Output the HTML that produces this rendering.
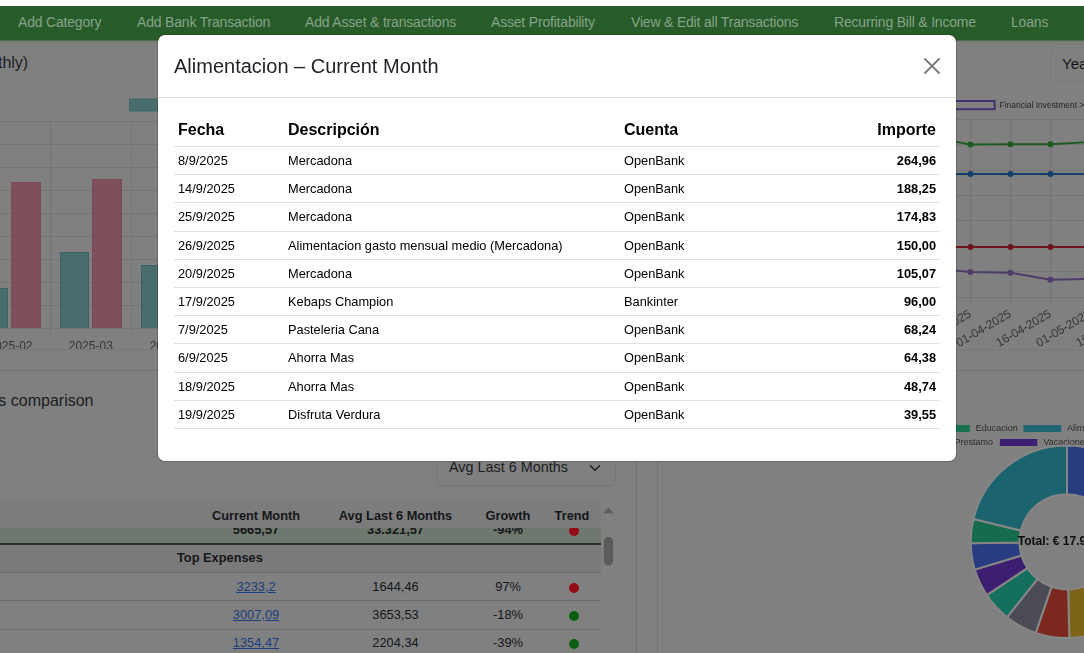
<!DOCTYPE html>
<html lang="en">
<head>
<meta charset="utf-8">
<title>Dashboard</title>
<style>
*{box-sizing:border-box;margin:0;padding:0}
html,body{width:1084px;height:653px;overflow:hidden;background:#fff}
body{font-family:"Liberation Sans",sans-serif;position:relative;color:#101214}
.abs{position:absolute}
#bg{position:absolute;left:0;top:6px;width:1084px;height:647px;background:#808080;overflow:hidden}
/* nav */
#nav{position:absolute;left:0;top:6px;width:1084px;height:34px;background:#285b2a}
#navedge{position:absolute;left:0;top:40px;width:1084px;height:4px;background:linear-gradient(#4f6b50 0,#4f6b50 25%,#717a71 25%,#7b7e7b 60%,#808080 100%)}
.nl{position:absolute;top:14px;font-size:14px;letter-spacing:-.19px;line-height:16px;color:#84a487;white-space:nowrap}
/* generic text */
.t{position:absolute;white-space:nowrap}
.b{font-weight:700}.c{text-align:center}.lk{color:#1a3e7c}
.dot{position:absolute;width:10px;height:10px;border-radius:50%}
/* modal */
#modal{position:absolute;left:157px;top:34px;width:800px;height:428px;background:#fff;border:1px solid rgba(0,0,0,.175);background-clip:padding-box;border-radius:8px;color:#212529}
#mhead{position:absolute;left:0;top:0;width:798px;height:63px;border-bottom:1px solid #dee2e6}
#mtitle{position:absolute;left:16px;top:16px;font-size:20px;line-height:30px;font-weight:400;color:#212529;white-space:nowrap}
#mclose{position:absolute;left:766px;top:23px;width:16px;height:16px;opacity:.5}
#mtable{position:absolute;left:16px;top:79px;width:766px;border-collapse:collapse;table-layout:fixed;color:#212529}
#mtable th{font-size:16px;line-height:24px;padding:4px;font-weight:700;text-align:left;border-bottom:1px solid #dee2e6;color:#000}
#mtable td{font-size:12.8px;line-height:19.2px;padding:4px;border-bottom:1px solid #dee2e6;white-space:nowrap;color:#000}
#mtable .r{text-align:right}
#mtable td.r{font-weight:700}
</style>
</head>
<body>
<div id="bg"></div>

<!-- NAV -->
<div id="nav"></div>
<div id="navedge"></div>
<span class="nl" style="left:18px">Add Category</span>
<span class="nl" style="left:137px">Add Bank Transaction</span>
<span class="nl" style="left:305px">Add Asset &amp; transactions</span>
<span class="nl" style="left:491px">Asset Profitability</span>
<span class="nl" style="left:631px">View &amp; Edit all Transactions</span>
<span class="nl" style="left:834px">Recurring Bill &amp; Income</span>
<span class="nl" style="left:1011px">Loans</span>

<!-- BACKGROUND-CONTENT -->
<!-- left card: bar chart -->
<div class="t" id="thly" style="left:-38.5px;top:54px;font-size:16px;line-height:18px;color:#1b1d1f">(Monthly)</div>
<svg class="abs" style="left:0;top:90px;will-change:transform" width="160" height="259" viewBox="0 90 160 259">
  <!-- legend box -->
  <rect x="129.5" y="99" width="39" height="12" fill="rgba(37,96,96,.6)" stroke="#3a6a6a" stroke-width="1"/>
  <g shape-rendering="crispEdges" fill="#747474">
    <rect x="0" y="121" width="160" height="1"/><rect x="0" y="144" width="160" height="1"/>
    <rect x="0" y="167" width="160" height="1"/><rect x="0" y="190" width="160" height="1"/>
    <rect x="0" y="213" width="160" height="1"/><rect x="0" y="236" width="160" height="1"/>
    <rect x="0" y="259" width="160" height="1"/><rect x="0" y="282" width="160" height="1"/>
    <rect x="0" y="305" width="160" height="1"/><rect x="0" y="328" width="160" height="1"/>
    <rect x="50" y="121" width="1" height="214"/><rect x="131" y="121" width="1" height="214"/>
  </g>
  <g shape-rendering="crispEdges">
    <!-- bars: fill .6 alpha over bg, border solid on 3 sides -->
    <path d="M-20.5 328V288.5H7.5V328" fill="rgba(37,96,96,.6)" stroke="#376363" stroke-width="1"/>
    <path d="M11.5 328V182.5H40.5V328" fill="rgba(127,49,66,.6)" stroke="#7c4a57" stroke-width="1"/>
    <path d="M60.5 328V252.5H88.5V328" fill="rgba(37,96,96,.6)" stroke="#376363" stroke-width="1"/>
    <path d="M92.5 328V179.5H121.5V328" fill="rgba(127,49,66,.6)" stroke="#7c4a57" stroke-width="1"/>
    <path d="M141.5 328V265.5H170.5V328" fill="rgba(37,96,96,.6)" stroke="#376363" stroke-width="1"/>
  </g>
  <g font-family="Liberation Sans, sans-serif" font-size="12" fill="#353535" text-anchor="middle">
    <text x="10.5" y="349.6">2025-02</text>
    <text x="90.8" y="349.6">2025-03</text>
    <text x="171.7" y="349.6">2025-04</text>
  </g>
</svg>

<!-- right card: line chart -->
<div class="abs" style="left:1050px;top:47px;width:60px;height:35px;border:1px solid #797979;border-radius:5px"></div>
<div class="t" style="left:1062px;top:55px;font-size:15px;line-height:18px;color:#151719">Year</div>
<svg class="abs" style="left:940px;top:90px;will-change:transform" width="144" height="259" viewBox="940 90 144 259">
  <rect x="940" y="101" width="54.6" height="8.2" fill="none" stroke="#46316f" stroke-width="2"/>
  <text x="999.6" y="107.6" font-family="Liberation Sans, sans-serif" font-size="8.45" fill="#262626">Financial Investment &gt; 10y</text>
  <g shape-rendering="crispEdges" fill="#747474">
    <rect x="940" y="119" width="144" height="1"/><rect x="940" y="144" width="144" height="1"/>
    <rect x="940" y="170" width="144" height="1"/><rect x="940" y="195" width="144" height="1"/>
    <rect x="940" y="220" width="144" height="1"/><rect x="940" y="246" width="144" height="1"/>
    <rect x="940" y="271" width="144" height="1"/><rect x="940" y="297" width="144" height="1"/>
    <rect x="970" y="119" width="1" height="185"/><rect x="1010" y="119" width="1" height="185"/>
    <rect x="1050" y="119" width="1" height="185"/>
  </g>
  <g fill="none" stroke-width="1.9" stroke-linejoin="round">
    <path d="M930.5 139.5 950 140.6 970.5 144.5 1010.5 144.2 1050.5 144.3 1090.5 142" stroke="#1d5a1f"/>
    <path d="M930 174H1090" stroke="#153f68"/>
    <path d="M930 247H1090" stroke="#6e1620"/>
    <path d="M930.5 268 970.5 272 1010.5 272.7 1050.5 279.8 1090.5 278.8" stroke="#4e3d6b"/>
  </g>
  <g>
    <circle cx="970.5" cy="144.5" r="3" fill="#1d5a1f"/><circle cx="1010.5" cy="144.2" r="3" fill="#1d5a1f"/><circle cx="1050.5" cy="144.3" r="3" fill="#1d5a1f"/>
    <circle cx="970.5" cy="174" r="3" fill="#153f68"/><circle cx="1010.5" cy="174" r="3" fill="#153f68"/><circle cx="1050.5" cy="174" r="3" fill="#153f68"/>
    <circle cx="970.5" cy="247" r="3" fill="#6e1620"/><circle cx="1010.5" cy="247" r="3" fill="#6e1620"/><circle cx="1050.5" cy="247" r="3" fill="#6e1620"/>
    <circle cx="970.5" cy="272" r="3" fill="#4e3d6b"/><circle cx="1010.5" cy="272.7" r="3" fill="#4e3d6b"/><circle cx="1050.5" cy="279.8" r="3" fill="#4e3d6b"/>
  </g>
  <g font-family="Liberation Sans, sans-serif" font-size="12" fill="#353535" text-anchor="end">
    <text transform="translate(972.0,316) rotate(-30.5)">16-03-2025</text>
    <text transform="translate(1012.0,316) rotate(-30.5)">01-04-2025</text>
    <text transform="translate(1052.0,316) rotate(-30.5)">16-04-2025</text>
    <text transform="translate(1092.0,316) rotate(-30.5)">01-05-2025</text>
    <text transform="translate(1132.0,316) rotate(-30.5)">16-05-2025</text>
  </g>
</svg>
<!-- card edges row 1 / row 2 -->
<div class="abs" style="left:0;top:349px;width:1084px;height:2px;background:linear-gradient(#7a7a7a,#7d7d7d)"></div>
<div class="abs" style="left:0;top:370px;width:636px;height:1px;background:#727272"></div>
<div class="abs" style="left:636px;top:370px;width:1px;height:283px;background:#727272"></div>
<div class="abs" style="left:657px;top:370px;width:427px;height:1px;background:#727272"></div>
<div class="abs" style="left:657px;top:370px;width:1px;height:283px;background:#727272"></div>

<!-- bottom-left card: comparison -->
<div class="t" style="left:-98.6px;top:392px;font-size:16px;line-height:18px;color:#1b1d1f">Monthly trends comparison</div>
<div class="abs" style="left:436px;top:450px;width:180px;height:36px;border:1px solid #757575;border-radius:6px"></div>
<div class="t" style="left:449px;top:459px;font-size:14.4px;line-height:17px;color:#1b1d1f">Avg Last 6 Months</div>
<svg class="abs" style="left:589px;top:462px" width="12" height="12" viewBox="0 0 16 16"><path d="M2 5l6 6 6-6" fill="none" stroke="#1c2024" stroke-width="2" stroke-linecap="round" stroke-linejoin="round"/></svg>
<!-- table -->
<div class="abs" id="cmp" style="left:0;top:501px;width:601px;height:152px;overflow:hidden;font-size:12.8px;line-height:19.2px;color:#151719">
  <div class="abs" style="left:0;top:14.8px;width:601px;height:27.7px;background:#6f786f"></div>
  <div class="t b c" style="left:216px;top:19.3px;width:80px">5665,57</div>
  <div class="t b c" style="left:345.5px;top:19.3px;width:100px">33.321,57</div>
  <div class="t b c" style="left:468px;top:19.3px;width:80px">-94%</div>
  <div class="dot" style="left:569px;top:24.5px;background:#950b15"></div>
  <div class="abs" style="left:0;top:0;width:601px;height:27.3px;background:#7c7c7d"></div>
  <div class="t b c" style="left:206px;top:4.5px;width:100px">Current Month</div>
  <div class="t b c" style="left:335.5px;top:4.5px;width:120px">Avg Last 6 Months</div>
  <div class="t b c" style="left:468px;top:4.5px;width:80px">Growth</div>
  <div class="t b c" style="left:532px;top:4.5px;width:80px">Trend</div>
  <div class="abs" style="left:0;top:41.7px;width:601px;height:2.3px;background:#2b2d2b"></div>
  <div class="abs" style="left:0;top:44px;width:601px;height:27.5px;background:#7a7a7a"></div>
  <div class="t b" style="left:177px;top:47.2px">Top Expenses</div>
  <div class="abs" style="left:0;top:71px;width:601px;height:1px;background:#6d6d6d"></div>
  <div class="abs" style="left:0;top:99px;width:601px;height:1px;background:#6d6d6d"></div>
  <div class="abs" style="left:0;top:128px;width:601px;height:1px;background:#6d6d6d"></div>
  <div class="t c lk" style="left:216px;top:75.8px;width:80px"><u>3233,2</u></div>
  <div class="t c" style="left:355.5px;top:75.8px;width:80px">1644,46</div>
  <div class="t c" style="left:468px;top:75.8px;width:80px">97%</div>
  <div class="dot" style="left:569px;top:81.8px;background:#950b15"></div>
  <div class="t c lk" style="left:216px;top:104px;width:80px"><u>3007,09</u></div>
  <div class="t c" style="left:355.5px;top:104px;width:80px">3653,53</div>
  <div class="t c" style="left:468px;top:104px;width:80px">-18%</div>
  <div class="dot" style="left:569px;top:110px;background:#0b5e12"></div>
  <div class="t c lk" style="left:216px;top:132.2px;width:80px"><u>1354,47</u></div>
  <div class="t c" style="left:355.5px;top:132.2px;width:80px">2204,34</div>
  <div class="t c" style="left:468px;top:132.2px;width:80px">-39%</div>
  <div class="dot" style="left:569px;top:138.2px;background:#0b5e12"></div>
</div>
<!-- scrollbar -->
<svg class="abs" style="left:601px;top:501px" width="16" height="152" viewBox="601 501 16 152">
  <path d="M603.4 513.2L608.4 507.6L613.4 513.2Z" fill="#5e5e5e"/>
  <rect x="603.9" y="536.9" width="9.2" height="28.7" rx="4.6" fill="#5b5b5b"/>
</svg>
<!-- bottom-right card: doughnut -->
<svg class="abs" style="left:940px;top:415px;will-change:transform" width="144" height="238" viewBox="940 415 144 238">
  <rect x="930" y="425" width="39.8" height="7" fill="#17714f"/>
  <rect x="1023.5" y="425" width="37.7" height="7" fill="#1f6672"/>
  <rect x="999.9" y="439" width="37.4" height="7" fill="#3d1f72"/>
  <g font-family="Liberation Sans, sans-serif" font-size="9" fill="#2b2b2b">
    <text x="975.7" y="431.3">Educacion</text><text x="1067" y="431.3">Alimentacion</text>
    <text x="992.9" y="445.3" text-anchor="end">Prestamo</text><text x="1043.4" y="445.3">Vacaciones</text>
  </g>
  <g stroke="#868686" stroke-width="2" stroke-linejoin="round">
    <path d="M1067.00 445.50A96.3 96.3 0 0 1 1140.77 603.70L1103.46 572.40A47.6 47.6 0 0 0 1067.00 494.20Z" fill="#283c80"/>
    <path d="M1140.77 603.70A96.3 96.3 0 0 1 1069.35 638.07L1068.16 589.39A47.6 47.6 0 0 0 1103.46 572.40Z" fill="#7d6419"/>
    <path d="M1069.35 638.07A96.3 96.3 0 0 1 1035.65 632.85L1051.50 586.81A47.6 47.6 0 0 0 1068.16 589.39Z" fill="#7b291f"/>
    <path d="M1035.65 632.85A96.3 96.3 0 0 1 1007.05 617.17L1037.37 579.05A47.6 47.6 0 0 0 1051.50 586.81Z" fill="#4b4b55"/>
    <path d="M1007.05 617.17A96.3 96.3 0 0 1 986.79 595.09L1027.35 568.14A47.6 47.6 0 0 0 1037.37 579.05Z" fill="#14705c"/>
    <path d="M986.79 595.09A96.3 96.3 0 0 1 974.81 569.63L1021.43 555.56A47.6 47.6 0 0 0 1027.35 568.14Z" fill="#3d1f72"/>
    <path d="M974.81 569.63A96.3 96.3 0 0 1 970.71 543.14L1019.40 542.46A47.6 47.6 0 0 0 1021.43 555.56Z" fill="#283d82"/>
    <path d="M970.71 543.14A96.3 96.3 0 0 1 973.44 518.99L1020.75 530.53A47.6 47.6 0 0 0 1019.40 542.46Z" fill="#156b4e"/>
    <path d="M973.44 518.99A96.3 96.3 0 0 1 1067.00 445.50L1067.00 494.20A47.6 47.6 0 0 0 1020.75 530.53Z" fill="#1c6370"/>
  </g>
  <text x="1067" y="545" text-anchor="middle" font-family="Liberation Sans, sans-serif" font-size="12" font-weight="700" fill="#0c0c0c">Total: € 17.945,20</text>
</svg>

<!-- MODAL -->
<div id="modal">
  <div id="mhead">
    <div id="mtitle">Alimentacion – Current Month</div>
    <svg id="mclose" viewBox="0 0 16 16"><path fill="#000" d="M.293.293a1 1 0 0 1 1.414 0L8 6.586 14.293.293a1 1 0 1 1 1.414 1.414L9.414 8l6.293 6.293a1 1 0 0 1-1.414 1.414L8 9.414l-6.293 6.293a1 1 0 0 1-1.414-1.414L6.586 8 .293 1.707a1 1 0 0 1 0-1.414z"/></svg>
  </div>
  <table id="mtable">
    <colgroup><col style="width:110px"><col style="width:336px"><col style="width:200px"><col style="width:120px"></colgroup>
    <thead><tr><th>Fecha</th><th>Descripción</th><th>Cuenta</th><th class="r">Importe</th></tr></thead>
    <tbody>
      <tr><td>8/9/2025</td><td>Mercadona</td><td>OpenBank</td><td class="r">264,96</td></tr>
      <tr><td>14/9/2025</td><td>Mercadona</td><td>OpenBank</td><td class="r">188,25</td></tr>
      <tr><td>25/9/2025</td><td>Mercadona</td><td>OpenBank</td><td class="r">174,83</td></tr>
      <tr><td>26/9/2025</td><td>Alimentacion gasto mensual medio (Mercadona)</td><td>OpenBank</td><td class="r">150,00</td></tr>
      <tr><td>20/9/2025</td><td>Mercadona</td><td>OpenBank</td><td class="r">105,07</td></tr>
      <tr><td>17/9/2025</td><td>Kebaps Champion</td><td>Bankinter</td><td class="r">96,00</td></tr>
      <tr><td>7/9/2025</td><td>Pasteleria Cana</td><td>OpenBank</td><td class="r">68,24</td></tr>
      <tr><td>6/9/2025</td><td>Ahorra Mas</td><td>OpenBank</td><td class="r">64,38</td></tr>
      <tr><td>18/9/2025</td><td>Ahorra Mas</td><td>OpenBank</td><td class="r">48,74</td></tr>
      <tr><td>19/9/2025</td><td>Disfruta Verdura</td><td>OpenBank</td><td class="r">39,55</td></tr>
    </tbody>
  </table>
</div>
</body>
</html>
